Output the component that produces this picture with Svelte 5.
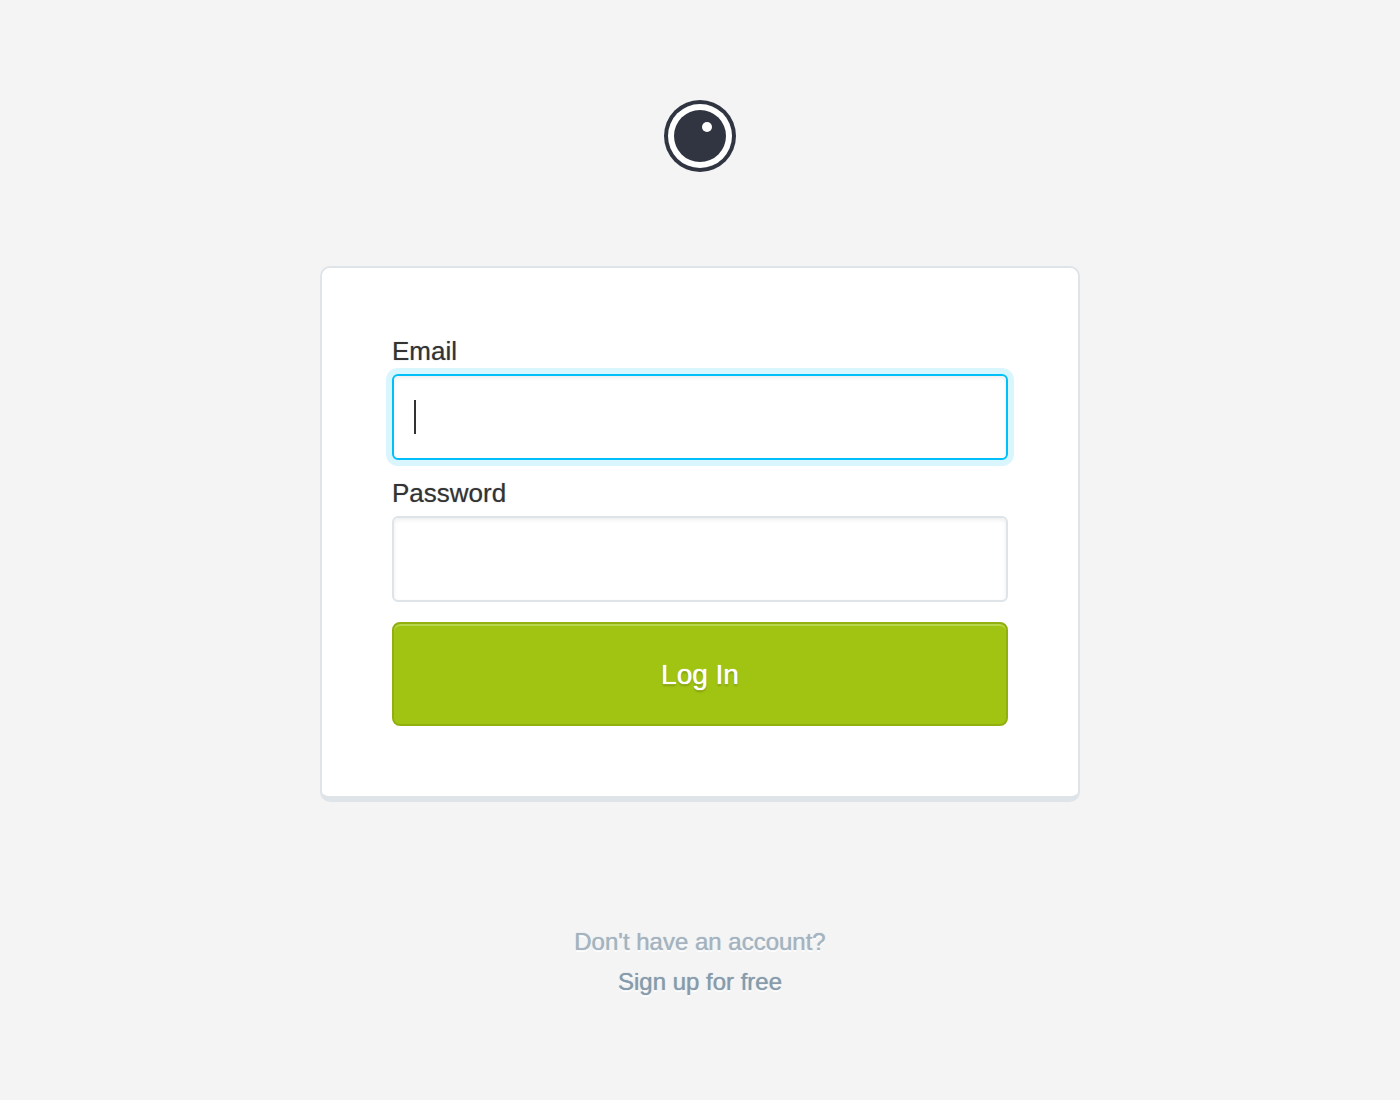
<script>
	import { onMount } from 'svelte'

	let email = $state('')
	let password = $state('')
	let email_focused = $state(true)
	let email_input

	onMount(() => {
		email_input.focus()
	})

	function log_in(e) {
		e.preventDefault()
	}
</script>

<main>
	<svg class="logo" viewBox="0 0 72 72" role="img" aria-label="Logo">
		<circle cx="36" cy="36" r="36" fill="#303541" />
		<circle cx="36" cy="36" r="32" fill="#fff" />
		<circle cx="36" cy="36" r="26" fill="#303541" />
		<circle cx="43" cy="27" r="5" fill="#fff" />
	</svg>

	<form onsubmit={log_in}>
		<label for="email">Email</label>
		<div class="field">
			<input
				id="email"
				class:active={email_focused}
				class:empty={email === ''}
				type="email"
				bind:this={email_input}
				bind:value={email}
				onfocus={() => {email_focused = true}}
				onblur={() => {email_focused = false}}>
			{#if email_focused && email === ''}
			<span class="caret"></span>
			{/if}
		</div>

		<label for="password">Password</label>
		<div class="field">
			<input id="password" type="password" bind:value={password}>
		</div>

		<button type="submit">Log In</button>
	</form>

	<footer>
		<p>Don't have an account?</p>
		<p><a href="#signup">Sign up for free</a></p>
	</footer>
</main>

<style>
:global(body) {
	background: #f4f4f4;
}
* {
	box-sizing: border-box;
}
main {
	display: flex;
	flex-direction: column;
	align-items: center;
	padding: 100px 20px 96px;
	font-family: "Helvetica Neue", Helvetica, "Liberation Sans", Arial, sans-serif;
	color: #333;
}
.logo {
	display: block;
	width: 72px;
	height: 72px;
	margin-bottom: 94px;
}
form {
	width: 100%;
	max-width: 760px;
	padding: 70px;
	background: #fff;
	border: 2px solid #dfe4e9;
	border-bottom-width: 6px;
	border-radius: 10px;
}
label {
	display: block;
	margin-bottom: 10px;
	font-size: 26px;
	line-height: 26px;
	text-shadow: 0 0 1px rgba(51, 51, 51, 0.5);
}
.field {
	position: relative;
	margin-bottom: 20px;
}
input {
	display: block;
	width: 100%;
	height: 86px;
	padding: 0 20px;
	font: inherit;
	font-size: 28px;
	color: #333;
	background: #fff;
	border: 2px solid #dfe4e9;
	border-radius: 6px;
	outline: none;
	box-shadow: inset 0 2px 4px rgba(0, 0, 0, 0.07);
}
input.active,
input:focus {
	border-color: #00bff9;
	box-shadow: inset 0 2px 4px rgba(0, 0, 0, 0.07), 0 0 0 6px #d9f6ff;
}
input.empty {
	caret-color: transparent;
}
.caret {
	position: absolute;
	left: 22px;
	top: 26px;
	width: 2px;
	height: 34px;
	background: #333;
	pointer-events: none;
}
button {
	display: block;
	width: 100%;
	height: 104px;
	padding: 2px 0 0;
	font: inherit;
	font-size: 28px;
	color: #fff;
	text-shadow: 0 0 1px #fff, 0 2px 2px rgba(0, 0, 0, 0.2);
	background: #a1c412;
	border: 2px solid #91b010;
	border-radius: 8px;
	box-shadow: inset 0 2px 0 #b8d64c;
	cursor: pointer;
}
footer {
	margin-top: 120px;
	font-size: 24px;
	line-height: 40px;
	text-align: center;
	color: #a5b3c0;
	text-shadow: 0 0 1px #a5b3c0, 0 2px 0 #fff;
}
p {
	margin: 0;
}
a {
	color: #879bac;
	text-decoration: none;
	text-shadow: 0 0 1px #879bac, 0 2px 0 #fff;
}
</style>
